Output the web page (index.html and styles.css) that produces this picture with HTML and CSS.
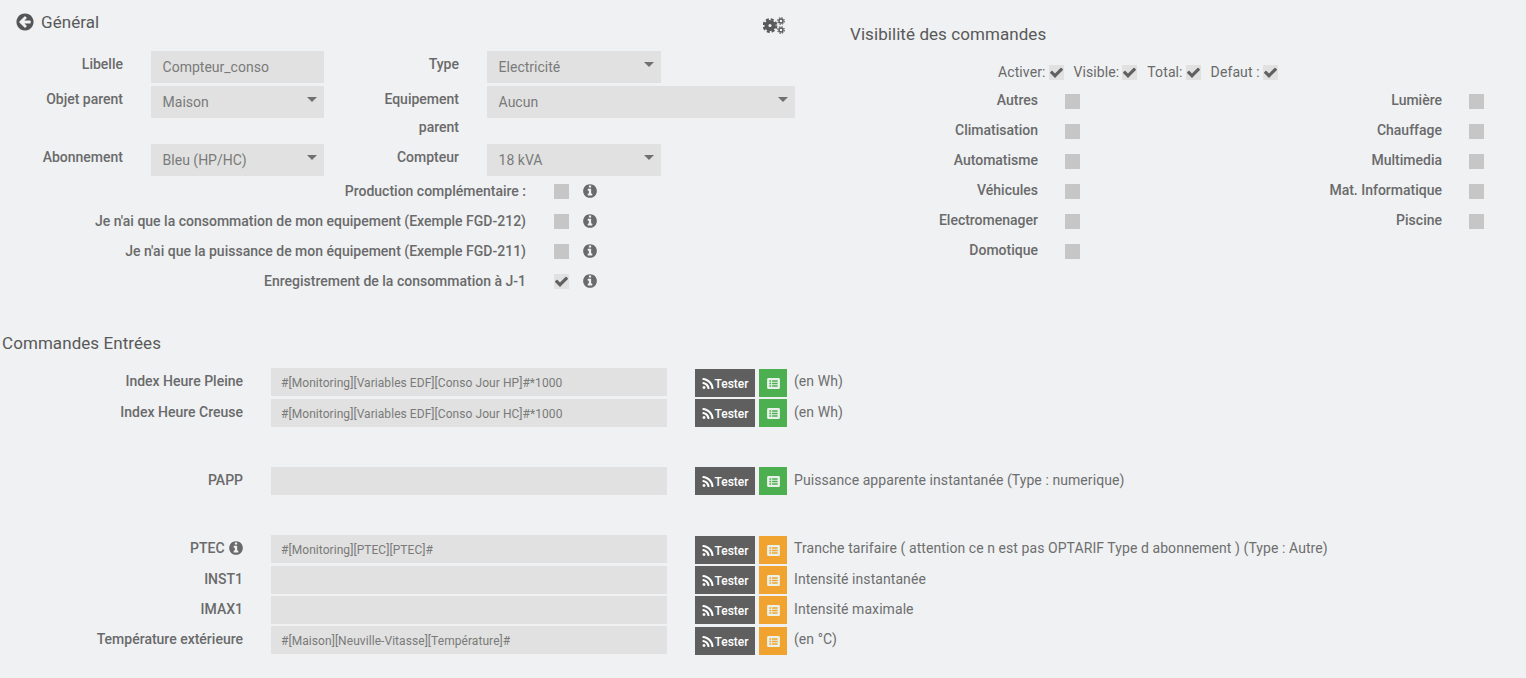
FILE: index.html
```html
<!DOCTYPE html>
<html lang="fr">
<head>
<meta charset="utf-8">
<title>Général</title>
<link rel="stylesheet" href="styles.css">
</head>
<body>
<svg class="defs" xmlns="http://www.w3.org/2000/svg">
  <symbol id="i-check" viewBox="0 0 1792 1792"><path d="M1671 566q0 40-28 68l-724 724-136 136q-28 28-68 28t-68-28l-136-136-362-362q-28-28-28-68t28-68l136-136q28-28 68-28t68 28l294 295 656-657q28-28 68-28t68 28l136 136q28 28 28 68z"/></symbol>
  <symbol id="i-info" viewBox="0 0 1792 1792"><path d="M1152 1376v-160q0-14-9-23t-23-9h-96v-512q0-14-9-23t-23-9h-320q-14 0-23 9t-9 23v160q0 14 9 23t23 9h96v320h-96q-14 0-23 9t-9 23v160q0 14 9 23t23 9h448q14 0 23-9t9-23zm-128-896v-160q0-14-9-23t-23-9h-192q-14 0-23 9t-9 23v160q0 14 9 23t23 9h192q14 0 23-9t9-23zm640 416q0 209-103 385.500t-279.500 279.500-385.500 103-385.500-103-279.500-279.500-103-385.500 103-385.500 279.500-279.500 385.500-103 385.500 103 279.500 279.500 103 385.500z"/></symbol>
  <symbol id="i-back" viewBox="0 0 1792 1792"><path d="M1408 960v-128q0-26-19-45t-45-19h-502l189-189q19-19 19-45t-19-45l-91-91q-18-18-45-18t-45 18l-362 362-91 91q-18 18-18 45t18 45l91 91 362 362q18 18 45 18t45-18l91-91q18-18 18-45t-18-45l-189-189h502q26 0 45-19t19-45zm256-64q0 209-103 385.500t-279.500 279.500-385.500 103-385.500-103-279.500-279.500-103-385.500 103-385.500 279.500-279.500 385.500-103 385.500 103 279.500 279.500 103 385.500z"/></symbol>
  <symbol id="i-rss" viewBox="0 0 1792 1792"><path d="M576 1344q0 80-56 136t-136 56-136-56-56-136 56-136 136-56 136 56 56 136zm512 123q2 28-17 48-18 21-47 21h-135q-25 0-43-16.500t-20-41.500q-22-229-184.500-391.500t-391.500-184.500q-25-2-41.500-20t-16.500-43v-135q0-29 21-47 17-17 43-17h5q160 13 306 80.500t259 181.500q114 113 181.500 259t80.500 306zm512 2q2 27-18 47-18 20-46 20h-143q-26 0-44.500-17.500t-19.500-42.500q-12-215-101-408.500t-231.500-336-336-231.500-408.500-102q-25-1-42.500-19.500t-17.500-43.500v-143q0-28 20-46 18-18 44-18h3q262 13 501.500 120t425.500 294q187 186 294 425.500t120 501.500z"/></symbol>
  <symbol id="i-list" viewBox="0 0 14 12"><path fill="#e9f1ea" d="M1.500 0h11A1.500 1.500 0 0 1 14 1.500v9a1.500 1.500 0 0 1-1.500 1.500h-11A1.500 1.500 0 0 1 0 10.500v-9A1.500 1.500 0 0 1 1.500 0z"/><path fill="currentColor" d="M2.500 2.500h2v1.500h-2zM5.500 2.500h6v1.500h-6zM2.500 5.250h2v1.500h-2zM5.500 5.250h6v1.500h-6zM2.500 8h2v1.500h-2zM5.500 8h6v1.500h-6z"/></symbol>
  <symbol id="i-cogs" viewBox="0 0 22 18">
    <g fill="none" stroke="#595959">
      <circle cx="7" cy="8.500" r="3.600" stroke-width="4"/>
      <circle cx="7" cy="8.500" r="6.300" stroke-width="2.200" stroke-dasharray="3 1.950"/>
      <circle cx="18" cy="4" r="2" stroke-width="1.400"/>
      <circle cx="18" cy="4" r="3.300" stroke-width="1.100" stroke-dasharray="1.500 1.090"/>
      <circle cx="18" cy="13" r="2" stroke-width="1.400"/>
      <circle cx="18" cy="13" r="3.300" stroke-width="1.100" stroke-dasharray="1.500 1.090"/>
    </g>
  </symbol>
</svg>

<main class="page">
  <section class="top">
    <div class="general">
      <header class="general-head">
        <h3 class="title"><svg class="icon-back"><use href="#i-back"/></svg>Général</h3>
        <svg class="icon-cogs"><use href="#i-cogs"/></svg>
      </header>

      <div class="form-grid">
        <label class="lbl row-start">Libelle</label>
        <div class="field">Compteur_conso</div>
        <label class="lbl">Type</label>
        <div class="field select">Electricité</div>

        <label class="lbl row-start">Objet parent</label>
        <div class="field select">Maison</div>
        <label class="lbl lbl-wrap">Equipement parent</label>
        <div class="field select span-2">Aucun</div>

        <label class="lbl row-start">Abonnement</label>
        <div class="field select">Bleu (HP/HC)</div>
        <label class="lbl">Compteur</label>
        <div class="field select">18 kVA</div>
      </div>

      <div class="options">
        <div class="option"><span class="opt-label">Production complémentaire :</span><span class="box"></span><svg class="icon-info"><use href="#i-info"/></svg></div>
        <div class="option"><span class="opt-label">Je n'ai que la consommation de mon equipement (Exemple FGD-212)</span><span class="box"></span><svg class="icon-info"><use href="#i-info"/></svg></div>
        <div class="option"><span class="opt-label">Je n'ai que la puissance de mon équipement (Exemple FGD-211)</span><span class="box"></span><svg class="icon-info"><use href="#i-info"/></svg></div>
        <div class="option"><span class="opt-label">Enregistrement de la consommation à J-1</span><span class="box on"><svg><use href="#i-check"/></svg></span><svg class="icon-info"><use href="#i-info"/></svg></div>
      </div>
    </div>

    <div class="visibility">
      <h3 class="title vis-title">Visibilité des commandes</h3>
      <div class="vis-flags">
        <span class="flag">Activer:<span class="box on"><svg><use href="#i-check"/></svg></span></span>
        <span class="flag">Visible:<span class="box on"><svg><use href="#i-check"/></svg></span></span>
        <span class="flag">Total:<span class="box on"><svg><use href="#i-check"/></svg></span></span>
        <span class="flag">Defaut :<span class="box on"><svg><use href="#i-check"/></svg></span></span>
      </div>
      <div class="vis-grid">
        <div class="cat"><span class="cat-name">Autres</span><span class="box"></span></div>
        <div class="cat"><span class="cat-name">Lumière</span><span class="box"></span></div>
        <div class="cat"><span class="cat-name">Climatisation</span><span class="box"></span></div>
        <div class="cat"><span class="cat-name">Chauffage</span><span class="box"></span></div>
        <div class="cat"><span class="cat-name">Automatisme</span><span class="box"></span></div>
        <div class="cat"><span class="cat-name">Multimedia</span><span class="box"></span></div>
        <div class="cat"><span class="cat-name">Véhicules</span><span class="box"></span></div>
        <div class="cat"><span class="cat-name">Mat. Informatique</span><span class="box"></span></div>
        <div class="cat"><span class="cat-name">Electromenager</span><span class="box"></span></div>
        <div class="cat"><span class="cat-name">Piscine</span><span class="box"></span></div>
        <div class="cat"><span class="cat-name">Domotique</span><span class="box"></span></div>
      </div>
    </div>
  </section>

  <section class="commands">
    <h3 class="title cmd-title">Commandes Entrées</h3>

    <div class="cmd cmd-first">
      <span class="cmd-label">Index Heure Pleine</span>
      <div class="cmd-input">#[Monitoring][Variables EDF][Conso Jour HP]#*1000</div>
      <button class="btn-test btn-low"><svg><use href="#i-rss"/></svg>Tester</button>
      <button class="btn-list green btn-low"><svg><use href="#i-list"/></svg></button>
      <span class="cmd-help">(en Wh)</span>
    </div>
    <div class="cmd group-end">
      <span class="cmd-label">Index Heure Creuse</span>
      <div class="cmd-input">#[Monitoring][Variables EDF][Conso Jour HC]#*1000</div>
      <button class="btn-test"><svg><use href="#i-rss"/></svg>Tester</button>
      <button class="btn-list green"><svg><use href="#i-list"/></svg></button>
      <span class="cmd-help">(en Wh)</span>
    </div>
    <div class="cmd group-end">
      <span class="cmd-label">PAPP</span>
      <div class="cmd-input"></div>
      <button class="btn-test"><svg><use href="#i-rss"/></svg>Tester</button>
      <button class="btn-list green"><svg><use href="#i-list"/></svg></button>
      <span class="cmd-help">Puissance apparente instantanée (Type : numerique)</span>
    </div>
    <div class="cmd cmd-first">
      <span class="cmd-label">PTEC <svg class="icon-info"><use href="#i-info"/></svg></span>
      <div class="cmd-input">#[Monitoring][PTEC][PTEC]#</div>
      <button class="btn-test btn-low"><svg><use href="#i-rss"/></svg>Tester</button>
      <button class="btn-list orange btn-low"><svg><use href="#i-list"/></svg></button>
      <span class="cmd-help">Tranche tarifaire ( attention ce n est pas OPTARIF Type d abonnement ) (Type : Autre)</span>
    </div>
    <div class="cmd">
      <span class="cmd-label">INST1</span>
      <div class="cmd-input"></div>
      <button class="btn-test"><svg><use href="#i-rss"/></svg>Tester</button>
      <button class="btn-list orange"><svg><use href="#i-list"/></svg></button>
      <span class="cmd-help">Intensité instantanée</span>
    </div>
    <div class="cmd">
      <span class="cmd-label">IMAX1</span>
      <div class="cmd-input"></div>
      <button class="btn-test"><svg><use href="#i-rss"/></svg>Tester</button>
      <button class="btn-list orange"><svg><use href="#i-list"/></svg></button>
      <span class="cmd-help">Intensité maximale</span>
    </div>
    <div class="cmd">
      <span class="cmd-label">Température extérieure</span>
      <div class="cmd-input">#[Maison][Neuville-Vitasse][Température]#</div>
      <button class="btn-test btn-low"><svg><use href="#i-rss"/></svg>Tester</button>
      <button class="btn-list orange btn-low"><svg><use href="#i-list"/></svg></button>
      <span class="cmd-help">(en °C)</span>
    </div>
  </section>
</main>
</body>
</html>
```

FILE: styles.css
```css
* { box-sizing: border-box; }

html, body { height: 100%; }

body {
  margin: 0;
  background: #eff1f3;
  color: #6a6a6a;
  font-family: Roboto, "Liberation Sans", sans-serif;
  font-size: 14px;
  overflow: hidden;
}

.defs { display: none; }

.title {
  margin: 0;
  font-size: 17px;
  font-weight: 400;
  letter-spacing: .07px;
  color: #595959;
  line-height: 22px;
}

.top { display: flex; }

.general { width: 795px; }

.general-head {
  display: flex;
  justify-content: space-between;
  align-items: flex-start;
  height: 51px;
  padding: 11px 10px 0 15px;
}

.general-head .title {
  display: flex;
  align-items: center;
  gap: 6px;
}

.icon-back { width: 20px; height: 20px; fill: #555; }

.icon-cogs { width: 22px; height: 18px; margin-top: 6px; }

.form-grid {
  display: grid;
  grid-template-columns: 123px 201px 135px 202px 134px;
  row-gap: 3px;
}

.lbl {
  font-weight: 500;
  text-align: right;
  line-height: 26px;
}

.row-start { grid-column: 1; }

.lbl-wrap {
  padding-left: 40px;
  line-height: 28px;
  margin-top: -1px;
}

.field {
  position: relative;
  height: 32px;
  margin-left: 28px;
  padding: 0 11.6px;
  background: #e0e1e0;
  color: #7a7a7a;
  line-height: 32px;
  white-space: nowrap;
}

.span-2 { grid-column: span 2; }

.select::after {
  content: "";
  position: absolute;
  top: 11px;
  right: 7px;
  border-style: solid;
  border-width: 5px 5px 0;
  border-color: #707070 transparent transparent;
}

.option {
  display: flex;
  align-items: center;
  height: 30px;
}

.opt-label {
  width: 526px;
  text-align: right;
  font-weight: 500;
  white-space: nowrap;
}

.box {
  display: inline-block;
  flex: none;
  width: 15px;
  height: 15px;
  background: #c6c6c6;
}

.box.on { background: #e0e1e0; }

.box svg { display: block; width: 15px; height: 15px; fill: #606060; }

.option .box { margin-left: 28px; }

.option .icon-info { margin-left: 13px; margin-top: -1px; }

.icon-info { width: 16px; height: 16px; fill: #6a6a6a; flex: none; }

.visibility { margin-left: 55px; width: 640px; }

.vis-title { padding-top: 23px; }

.vis-flags {
  display: flex;
  margin-top: 17px;
  padding-left: 148px;
  height: 20px;
  align-items: center;
  letter-spacing: .1px;
}

.flag { display: flex; align-items: center; gap: 3px; margin-right: 10px; }

.vis-grid {
  display: grid;
  grid-template-columns: 230px 404px;
  grid-auto-rows: 30px;
  margin-top: 4px;
}

.cat {
  display: flex;
  justify-content: flex-end;
  align-items: center;
  gap: 27px;
  font-weight: 500;
}

.cat-name { padding-bottom: 2px; }

.commands { margin-top: 36px; }

.cmd-title { padding-left: 2px; margin-bottom: 14px; }

.cmd {
  display: flex;
  align-items: flex-start;
  height: 30px;
}

.cmd-first { height: 31px; }

.group-end { margin-bottom: 38px; }

.cmd-label {
  width: 243px;
  flex: none;
  text-align: right;
  font-weight: 500;
  line-height: 26px;
}

.cmd-label .icon-info { vertical-align: -3px; margin-right: -1px; }

.cmd-input {
  flex: none;
  width: 396px;
  height: 28px;
  margin-left: 28px;
  padding: 0 10px;
  background: #e0e1e0;
  color: #7a7a7a;
  font-size: 12px;
  letter-spacing: .06px;
  line-height: 30px;
  white-space: nowrap;
}

button {
  border: 0;
  padding: 0;
  font-family: inherit;
  flex: none;
  height: 28px;
}

.btn-test {
  display: flex;
  align-items: center;
  justify-content: center;
  width: 60px;
  margin-left: 28px;
  padding-top: 2px;
  background: #5f5f5f;
  color: #fff;
  font-size: 12px;
  font-weight: 500;
}

.btn-test svg { width: 14px; height: 14px; margin-right: -1px; fill: #fff; }

.btn-list {
  display: flex;
  align-items: center;
  justify-content: center;
  width: 28px;
  margin-left: 4px;
}

.btn-list svg { width: 13px; height: 11px; }

.green { background: #4caf50; color: #4caf50; }

.orange { background: #f0a32f; color: #f0a32f; }

.btn-low { margin-top: 1px; }

.cmd-help {
  margin-left: 7px;
  color: #6e6e6e;
  letter-spacing: .07px;
  line-height: 26px;
  white-space: nowrap;
}
```
